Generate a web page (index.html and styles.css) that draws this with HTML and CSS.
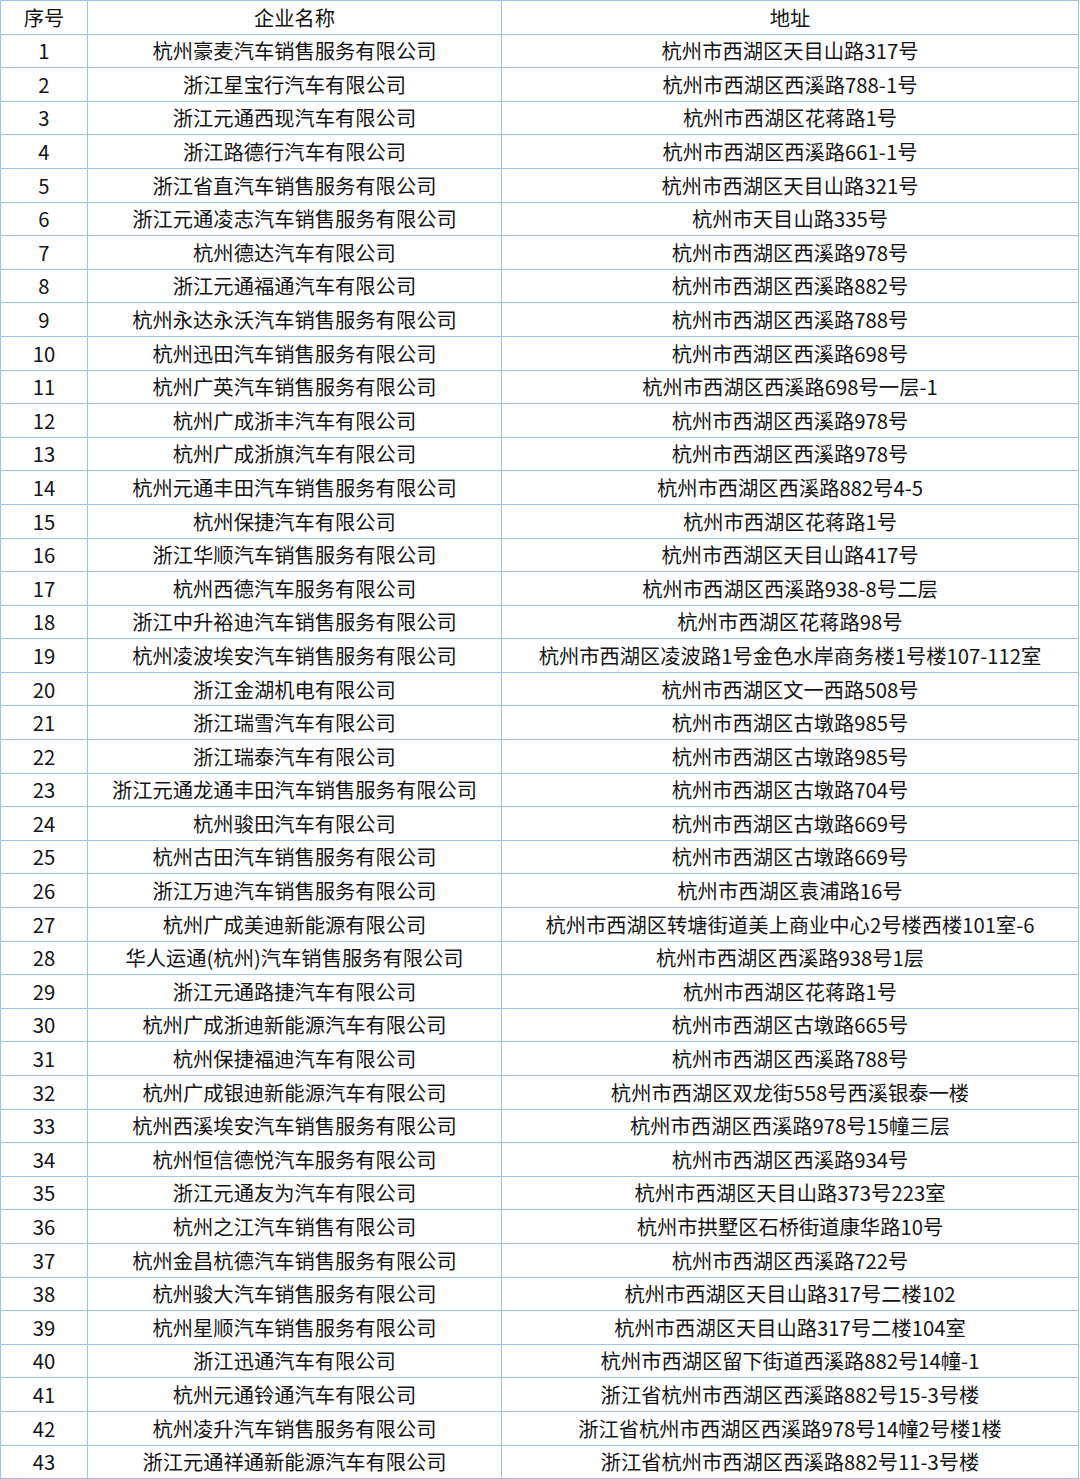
FILE: index.html
```html
<!DOCTYPE html>
<html lang="zh">
<head>
<meta charset="utf-8">
<link rel="stylesheet" href="styles.css">
</head>
<body>
<table class="list">
<colgroup><col class="c1"><col class="c2"><col class="c3"></colgroup>
<thead>
<tr><th>序号</th><th>企业名称</th><th>地址</th></tr>
</thead>
<tbody>
<tr><td>1</td><td>杭州豪麦汽车销售服务有限公司</td><td>杭州市西湖区天目山路317号</td></tr>
<tr><td>2</td><td>浙江星宝行汽车有限公司</td><td>杭州市西湖区西溪路788-1号</td></tr>
<tr><td>3</td><td>浙江元通西现汽车有限公司</td><td>杭州市西湖区花蒋路1号</td></tr>
<tr><td>4</td><td>浙江路德行汽车有限公司</td><td>杭州市西湖区西溪路661-1号</td></tr>
<tr><td>5</td><td>浙江省直汽车销售服务有限公司</td><td>杭州市西湖区天目山路321号</td></tr>
<tr><td>6</td><td>浙江元通凌志汽车销售服务有限公司</td><td>杭州市天目山路335号</td></tr>
<tr><td>7</td><td>杭州德达汽车有限公司</td><td>杭州市西湖区西溪路978号</td></tr>
<tr><td>8</td><td>浙江元通福通汽车有限公司</td><td>杭州市西湖区西溪路882号</td></tr>
<tr><td>9</td><td>杭州永达永沃汽车销售服务有限公司</td><td>杭州市西湖区西溪路788号</td></tr>
<tr><td>10</td><td>杭州迅田汽车销售服务有限公司</td><td>杭州市西湖区西溪路698号</td></tr>
<tr><td>11</td><td>杭州广英汽车销售服务有限公司</td><td>杭州市西湖区西溪路698号一层-1</td></tr>
<tr><td>12</td><td>杭州广成浙丰汽车有限公司</td><td>杭州市西湖区西溪路978号</td></tr>
<tr><td>13</td><td>杭州广成浙旗汽车有限公司</td><td>杭州市西湖区西溪路978号</td></tr>
<tr><td>14</td><td>杭州元通丰田汽车销售服务有限公司</td><td>杭州市西湖区西溪路882号4-5</td></tr>
<tr><td>15</td><td>杭州保捷汽车有限公司</td><td>杭州市西湖区花蒋路1号</td></tr>
<tr><td>16</td><td>浙江华顺汽车销售服务有限公司</td><td>杭州市西湖区天目山路417号</td></tr>
<tr><td>17</td><td>杭州西德汽车服务有限公司</td><td>杭州市西湖区西溪路938-8号二层</td></tr>
<tr><td>18</td><td>浙江中升裕迪汽车销售服务有限公司</td><td>杭州市西湖区花蒋路98号</td></tr>
<tr><td>19</td><td>杭州凌波埃安汽车销售服务有限公司</td><td>杭州市西湖区凌波路1号金色水岸商务楼1号楼107-112室</td></tr>
<tr><td>20</td><td>浙江金湖机电有限公司</td><td>杭州市西湖区文一西路508号</td></tr>
<tr><td>21</td><td>浙江瑞雪汽车有限公司</td><td>杭州市西湖区古墩路985号</td></tr>
<tr><td>22</td><td>浙江瑞泰汽车有限公司</td><td>杭州市西湖区古墩路985号</td></tr>
<tr><td>23</td><td>浙江元通龙通丰田汽车销售服务有限公司</td><td>杭州市西湖区古墩路704号</td></tr>
<tr><td>24</td><td>杭州骏田汽车有限公司</td><td>杭州市西湖区古墩路669号</td></tr>
<tr><td>25</td><td>杭州古田汽车销售服务有限公司</td><td>杭州市西湖区古墩路669号</td></tr>
<tr><td>26</td><td>浙江万迪汽车销售服务有限公司</td><td>杭州市西湖区袁浦路16号</td></tr>
<tr><td>27</td><td>杭州广成美迪新能源有限公司</td><td>杭州市西湖区转塘街道美上商业中心2号楼西楼101室-6</td></tr>
<tr><td>28</td><td>华人运通(杭州)汽车销售服务有限公司</td><td>杭州市西湖区西溪路938号1层</td></tr>
<tr><td>29</td><td>浙江元通路捷汽车有限公司</td><td>杭州市西湖区花蒋路1号</td></tr>
<tr><td>30</td><td>杭州广成浙迪新能源汽车有限公司</td><td>杭州市西湖区古墩路665号</td></tr>
<tr><td>31</td><td>杭州保捷福迪汽车有限公司</td><td>杭州市西湖区西溪路788号</td></tr>
<tr><td>32</td><td>杭州广成银迪新能源汽车有限公司</td><td>杭州市西湖区双龙街558号西溪银泰一楼</td></tr>
<tr><td>33</td><td>杭州西溪埃安汽车销售服务有限公司</td><td>杭州市西湖区西溪路978号15幢三层</td></tr>
<tr><td>34</td><td>杭州恒信德悦汽车服务有限公司</td><td>杭州市西湖区西溪路934号</td></tr>
<tr><td>35</td><td>浙江元通友为汽车有限公司</td><td>杭州市西湖区天目山路373号223室</td></tr>
<tr><td>36</td><td>杭州之江汽车销售有限公司</td><td>杭州市拱墅区石桥街道康华路10号</td></tr>
<tr><td>37</td><td>杭州金昌杭德汽车销售服务有限公司</td><td>杭州市西湖区西溪路722号</td></tr>
<tr><td>38</td><td>杭州骏大汽车销售服务有限公司</td><td>杭州市西湖区天目山路317号二楼102</td></tr>
<tr><td>39</td><td>杭州星顺汽车销售服务有限公司</td><td>杭州市西湖区天目山路317号二楼104室</td></tr>
<tr><td>40</td><td>浙江迅通汽车有限公司</td><td>杭州市西湖区留下街道西溪路882号14幢-1</td></tr>
<tr><td>41</td><td>杭州元通铃通汽车有限公司</td><td>浙江省杭州市西湖区西溪路882号15-3号楼</td></tr>
<tr><td>42</td><td>杭州凌升汽车销售服务有限公司</td><td>浙江省杭州市西湖区西溪路978号14幢2号楼1楼</td></tr>
<tr><td>43</td><td>浙江元通祥通新能源汽车有限公司</td><td>浙江省杭州市西湖区西溪路882号11-3号楼</td></tr>
</tbody>
</table>
</body>
</html>
```

FILE: styles.css
```css
html, body {
  margin: 0;
  padding: 0;
  background: #ffffff;
}
body {
  font-family: "Noto Sans CJK SC", "Noto Sans", sans-serif;
  color: #141414;
}
.list {
  width: 1078px;
  border-collapse: collapse;
  table-layout: fixed;
}
.c1 { width: 87px; }
.c2 { width: 414px; }
.c3 { width: 577px; }
.list th,
.list td {
  border: 1px solid #9fc2e8;
  height: 31.6px;
  padding: 0 0 1px;
  text-align: center;
  vertical-align: middle;
  font-size: 20.3px;
  font-weight: normal;
  line-height: 1;
  white-space: nowrap;
}
```
